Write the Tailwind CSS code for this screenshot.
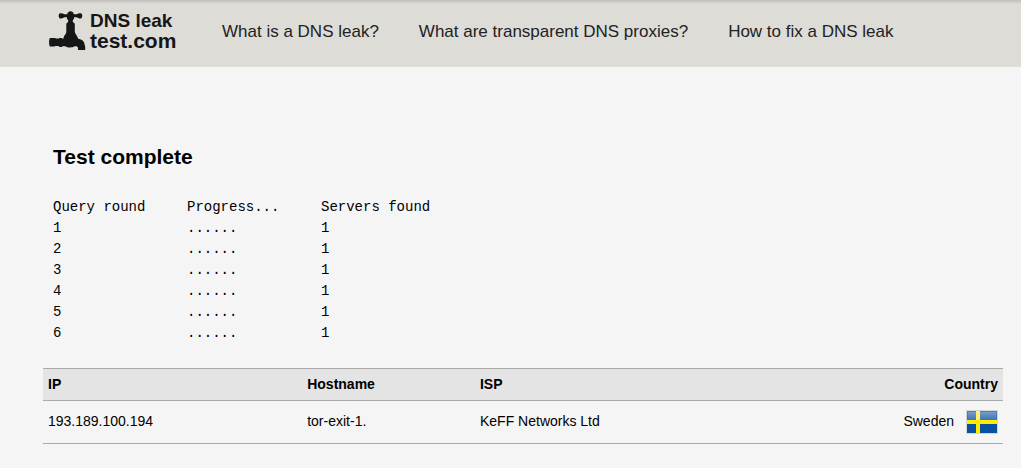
<!DOCTYPE html>
<html lang="en">
<head>
<meta charset="utf-8">
<meta name="viewport" content="width=device-width, initial-scale=1">
<title>DNS leak test</title>
<script src="https://cdn.jsdelivr.net/npm/@tailwindcss/browser@4"></script>
</head>
<body class="bg-[#f5f5f5] font-['Liberation_Sans',Arial,sans-serif] text-sm text-black">
<header class="bg-[#dddcd7] bg-linear-to-b from-[#bfbeba] to-[#dddcd7] to-[4px] pt-2 pb-[15px] pl-12">
  <div class="flex items-start">
    <a href="#" class="flex w-[174px] shrink-0 gap-[4px] text-[#161616]" aria-label="DNS leak test.com">
      <svg class="mt-[2px] h-[42px] w-[38px]" viewBox="0 0 38 42" fill="currentColor" aria-hidden="true">
        <path d="M11.5 3.5C13 2.8 15 3.4 16.3 4.2H19.2C19.7 2 21 1.2 22.5 1.2S25.4 2 25.9 4.2H28.7C30 3.4 32 2.8 33.4 3.5C34.6 4.5 34.6 7 33.4 8.2C32 8.8 30 8.1 28.7 7.2H26V8.8C25 9.7 24.6 10.5 24.8 12C26 12.4 26.8 13.3 26.8 14.5V21.5C26.8 24 29.5 25.5 30 28.5C31.5 29.3 34.2 29.3 35.5 31.5C36.6 33.3 36.5 34.5 37.2 36.5V40H30V37.6C29.3 36.4 28.2 36.2 26.7 36.3C24.6 37.8 20 38 17.2 36.3H14.5L13.8 37H11.5L10.5 36H7V36.5H1.8C.8 34.5 .8 30.5 1.8 28H7.2L7.8 28.6H10.8L11.5 28H14L14.5 28.8H15.4C15.5 25.6 18.3 24.4 18.3 21.5V14.5C18.3 13.3 19 12.4 20.2 12C20.4 10.5 20 9.7 19 8.8V7.2H16.3C15 8.1 13 8.8 11.5 8.2C10.4 7 10.4 4.5 11.5 3.5Z"/>
      </svg>
      <span class="flex flex-col pt-[3px] font-bold leading-5 whitespace-nowrap">
        <span class="text-[19px]">DNS leak</span>
        <span class="text-[21px]">test.com</span>
      </span>
    </a>
    <nav class="flex gap-10 pt-[13px] text-[17px] leading-[22px] whitespace-nowrap text-[#222]">
      <a href="#">What is a DNS leak?</a>
      <a href="#">What are transparent DNS proxies?</a>
      <a href="#">How to fix a DNS leak</a>
    </nav>
  </div>
</header>
<main class="pt-[76px] pr-[18px] pl-[43px]">
  <h1 class="pl-[10px] text-[21px] leading-7 font-bold">Test complete</h1>
  <table class="mt-[26px] ml-[10px] table-fixed text-left font-['Liberation_Mono',monospace] text-sm leading-[21px]">
    <thead>
      <tr><th class="w-[134px] p-0 font-normal">Query round</th><th class="w-[134px] p-0 font-normal">Progress...</th><th class="p-0 font-normal">Servers found</th></tr>
    </thead>
    <tbody>
      <tr><td>1</td><td>......</td><td>1</td></tr>
      <tr><td>2</td><td>......</td><td>1</td></tr>
      <tr><td>3</td><td>......</td><td>1</td></tr>
      <tr><td>4</td><td>......</td><td>1</td></tr>
      <tr><td>5</td><td>......</td><td>1</td></tr>
      <tr><td>6</td><td>......</td><td>1</td></tr>
    </tbody>
  </table>
  <table class="mt-6 w-full border-separate border-spacing-0 text-left leading-5">
    <thead class="bg-[#e4e4e4]">
      <tr>
        <th class="h-[33px] w-[27%] border-y border-[#aaa] px-[5px] pb-[2px]">IP</th>
        <th class="w-[18%] border-y border-[#aaa] px-[5px] pb-[2px]">Hostname</th>
        <th class="border-y border-[#aaa] px-[5px] pb-[2px]">ISP</th>
        <th class="border-y border-[#aaa] px-[5px] pb-[2px] text-right">Country</th>
      </tr>
    </thead>
    <tbody>
      <tr>
        <td class="h-[43px] border-b border-[#aaa] px-[5px] pb-[2px]">193.189.100.194</td>
        <td class="border-b border-[#aaa] px-[5px] pb-[2px]">tor-exit-1.</td>
        <td class="border-b border-[#aaa] px-[5px] pb-[2px]">KeFF Networks Ltd</td>
        <td class="border-b border-[#aaa] px-[5px]">
          <div class="flex items-center justify-end gap-3">
            <span class="pb-[2px]">Sweden</span>
            <svg class="h-6 w-8" viewBox="0 0 32 24" role="img" aria-label="Flag of Sweden">
              <defs>
                <linearGradient id="gloss" x1="0" y1="0" x2="0" y2="1"><stop offset="0" stop-color="#7ea1cd"/><stop offset="1" stop-color="#3d73b5"/></linearGradient>
              </defs>
              <rect width="32" height="24" rx="1" fill="#d5d5d5"/>
              <rect x="1" y="1" width="30" height="22" fill="#0a50a1"/>
              <rect x="1" y="1" width="30" height="9" fill="url(#gloss)"/>
              <path d="M1.5 10V1.5H30.5V10" fill="none" stroke="#3d70b0" stroke-opacity=".7"/>
              <path d="M10 1h4v9h17v4H14v9h-4v-9H1v-4h9z" fill="#ffed00"/>
              <path d="M10 1h4v9h-4z" fill="#fff36a"/>
            </svg>
          </div>
        </td>
      </tr>
    </tbody>
  </table>
</main>
</body>
</html>
